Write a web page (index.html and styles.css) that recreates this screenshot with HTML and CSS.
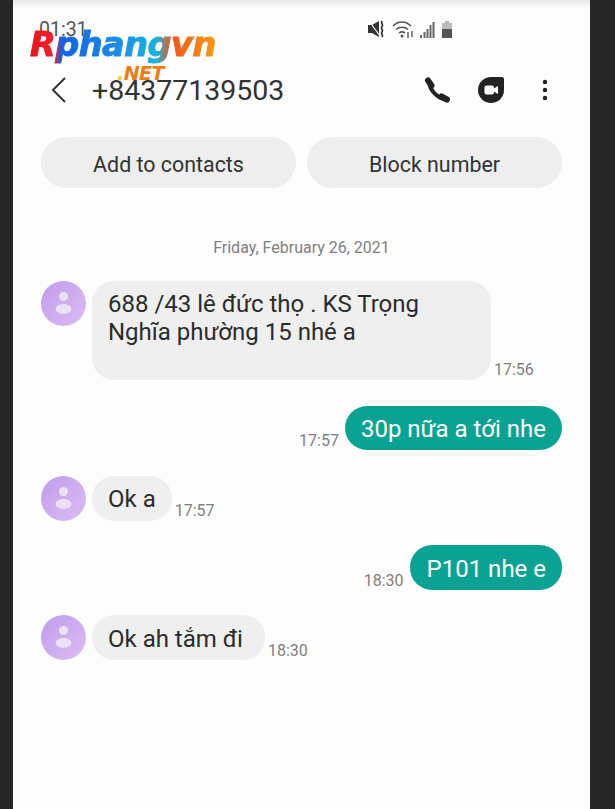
FILE: index.html
```html
<!DOCTYPE html>
<html>
  <head>
    <title>Messages</title>
    <link rel="stylesheet" href="styles.css">
  </head>
  <body>
    <div class="phone">
      <div class="status-bar">
        <span class="time">01:31</span>
        <div class="status-icons">
          <svg width="18" height="18" viewBox="0 0 18 18">
            <path d="M0 5h4l7-4v16l-7-4H0z" fill="#333"/>
            <path d="M1 1l11 15" stroke="#fdfdfd" stroke-width="1.200"/>
            <path d="M14 1c-2 2.500 2 3 0 5.500s2 3 0 5.500 2 2.500 0 5" fill="none" stroke="#333" stroke-width="1.800"/>
          </svg>
          <svg width="22" height="18" viewBox="0 0 22 18">
            <path d="M1 6c5-5.500 13-5.500 18 0M4 9.500c3-3 9-3 12 0M7 13c2-1.500 4-1.500 6 0" fill="none" stroke="#555" stroke-width="1.500"/>
            <circle cx="10" cy="16" r="1.500" fill="#555"/>
            <path d="M16 12v6M20 11v6" stroke="#666" stroke-width="1.500"/>
          </svg>
          <svg width="15" height="17" viewBox="0 0 15 17">
            <path d="M1 17v-3M4.500 17v-6M7.500 17V8M10.500 17V4M13.500 17V1" stroke="#666" stroke-width="2"/>
          </svg>
          <svg class="battery" width="12" height="17" viewBox="0 0 12 17">
            <path d="M4 0h4v2h3v15H1V2h3z" fill="#bbb"/>
            <path d="M1 8h10v9H1z" fill="#555"/>
          </svg>
        </div>
      </div>

      <div class="header">
        <svg class="back" width="18" height="28" viewBox="0 0 18 28">
          <path d="M15 2L3 14l12 12" fill="none" stroke="#333" stroke-width="2"/>
        </svg>
        <span class="number">+84377139503</span>
        <div class="header-icons">
          <svg width="26" height="26" viewBox="0 0 26 26">
            <path d="M5.500 5c-.500 8 9 17 17 17.500" fill="none" stroke="#222" stroke-width="4"/>
            <path d="M4 3.500l3.500 5M17.500 19.500l5.500 3" fill="none" stroke="#222" stroke-width="6" stroke-linecap="round"/>
          </svg>
          <svg width="26" height="26" viewBox="0 0 26 26">
            <path d="M13 0h11c1 0 2 1 2 2v11A13 13 0 1 1 13 0z" fill="#222"/>
            <rect x="6.500" y="8.500" width="9.500" height="9" rx="2" fill="#fdfdfd"/>
            <path d="M15 12l5-3v8l-5-3z" fill="#fdfdfd"/>
          </svg>
          <svg class="more" width="6" height="22" viewBox="0 0 6 22">
            <circle cx="3" cy="3" r="2.200" fill="#222"/>
            <circle cx="3" cy="11" r="2.200" fill="#222"/>
            <circle cx="3" cy="19" r="2.200" fill="#222"/>
          </svg>
        </div>
      </div>

      <div class="actions">
        <div class="action">Add to contacts</div>
        <div class="action">Block number</div>
      </div>

      <div class="date">Friday, February 26, 2021</div>

      <div class="messages">
        <div class="row first">
          <svg class="avatar" viewBox="0 0 45 45">
            <circle cx="22.500" cy="15.500" r="4.500" fill="#ece0f7"/>
            <ellipse cx="22.500" cy="28" rx="8" ry="5" fill="#ece0f7"/>
          </svg>
          <div class="bubble in tall">688 /43 lê đức thọ . KS Trọng<br>Nghĩa phường 15 nhé a</div>
          <span class="stamp">17:56</span>
        </div>
        <div class="row out second">
          <span class="stamp">17:57</span>
          <div class="bubble sent">30p nữa a tới nhe</div>
        </div>
        <div class="row third">
          <svg class="avatar" viewBox="0 0 45 45">
            <circle cx="22.500" cy="15.500" r="4.500" fill="#ece0f7"/>
            <ellipse cx="22.500" cy="28" rx="8" ry="5" fill="#ece0f7"/>
          </svg>
          <div class="bubble in">Ok a</div>
          <span class="stamp">17:57</span>
        </div>
        <div class="row out fourth">
          <span class="stamp">18:30</span>
          <div class="bubble sent">P101 nhe e</div>
        </div>
        <div class="row fifth">
          <svg class="avatar" viewBox="0 0 45 45">
            <circle cx="22.500" cy="15.500" r="4.500" fill="#ece0f7"/>
            <ellipse cx="22.500" cy="28" rx="8" ry="5" fill="#ece0f7"/>
          </svg>
          <div class="bubble in wide">Ok ah tắm đi</div>
          <span class="stamp">18:30</span>
        </div>
      </div>

      <div class="logo">
        <div class="logo-name">Rphangvn</div>
        <div class="logo-net"><span class="logo-dot">.</span>NET</div>
      </div>
    </div>
  </body>
</html>
```

FILE: styles.css
```css
html,
body {
  margin: 0;
  height: 809px;
  overflow: hidden;
}

body {
  background-color: #262626;
  font-family: "Roboto", sans-serif;
  color: #2b2b2b;
}

.phone {
  position: relative;
  box-sizing: border-box;
  width: 577px;
  height: 809px;
  margin-left: 13px;
  padding: 0 28px;
  background: linear-gradient(#e9e9e9, #fdfdfd 9px);
}

.logo {
  position: absolute;
  left: 17px;
  top: 26px;
  font-family: "DejaVu Sans", sans-serif;
  font-weight: bold;
  font-style: italic;
}

.logo-name {
  font-size: 33.500px;
  line-height: 38px;
  letter-spacing: -0.5px;
  white-space: nowrap;
  background: linear-gradient(90deg, #e8141c 0, #f0202a 13%, #1160e8 17%, #1a8ae6 45%, #18b4dc 68%, #f0561a 76%, #f79a12 100%);
  -webkit-background-clip: text;
  background-clip: text;
  color: transparent;
  -webkit-text-stroke: 1px transparent;
}

.logo-net {
  margin: 0 0 0 87px;
  font-size: 19px;
  line-height: 18px;
  letter-spacing: -0.5px;
  color: #f57a10;
}

.logo-dot {
  color: #f5d020;
}

.status-bar {
  display: flex;
  justify-content: space-between;
  align-items: center;
  height: 58px;
}

.time {
  margin-left: -2px;
  font-size: 19.500px;
  color: #555;
}

.status-icons {
  display: flex;
  align-items: center;
  gap: 6px;
  margin-right: 109px;
}

.header {
  display: flex;
  align-items: center;
  height: 64px;
}

.back {
  margin-left: 9px;
}

.number {
  margin-left: 24px;
  font-size: 28.500px;
  color: #333;
}

.header-icons {
  display: flex;
  align-items: center;
  gap: 28px;
  margin-left: auto;
  margin-right: 14px;
}

.more {
  margin-left: 10px;
}

.actions {
  display: grid;
  grid-template-columns: 255px 255px;
  gap: 11px;
  margin-top: 15px;
}

.action {
  height: 51px;
  line-height: 55px;
  border-radius: 26px;
  background-color: #eeeeee;
  text-align: center;
  font-size: 21.400px;
  color: #333;
}

.date {
  margin-top: 51px;
  text-align: center;
  font-size: 16px;
  line-height: 18px;
  color: #808080;
}

.row {
  display: flex;
  align-items: flex-end;
}

.row.out {
  justify-content: flex-end;
  width: 521px;
}

.first {
  align-items: flex-start;
  margin-top: 24px;
}

.second {
  margin-top: 26px;
}

.third,
.fifth {
  align-items: flex-start;
}

.third {
  margin-top: 26px;
}

.fourth {
  margin-top: 24px;
}

.fifth {
  margin-top: 25px;
}

.avatar {
  flex: none;
  width: 45px;
  height: 45px;
  margin-right: 6px;
  border-radius: 50%;
  background: linear-gradient(135deg, #c09cec, #dcbdf2);
}

.bubble {
  box-sizing: border-box;
  height: 44px;
  padding: 9px 16px;
  border-radius: 22px;
  font-size: 24px;
  line-height: 28px;
}

.in {
  background-color: #efefef;
  color: #2b2b2b;
}

.third .in,
.fifth .in {
  height: 45px;
}

.wide {
  padding-right: 22px;
  padding-top: 10px;
}

.tall {
  width: 399px;
  height: 99px;
  padding-top: 9px;
}

.sent {
  background-color: #0aa393;
  color: #ffffff;
}

.fourth .sent {
  height: 45px;
  padding: 10px 16px 9px 17px;
}

.stamp {
  align-self: flex-end;
  margin: 0 4px;
  font-size: 16px;
  line-height: 18px;
  color: #808080;
}

.row.out .stamp {
  margin: 0 6px 0 0;
}

.first .stamp {
  margin-bottom: 1px;
  margin-left: 3px;
}

.third .stamp,
.fifth .stamp {
  margin-left: 3px;
  margin-bottom: 1px;
}

.fifth .stamp {
  margin-bottom: 0;
}
```
